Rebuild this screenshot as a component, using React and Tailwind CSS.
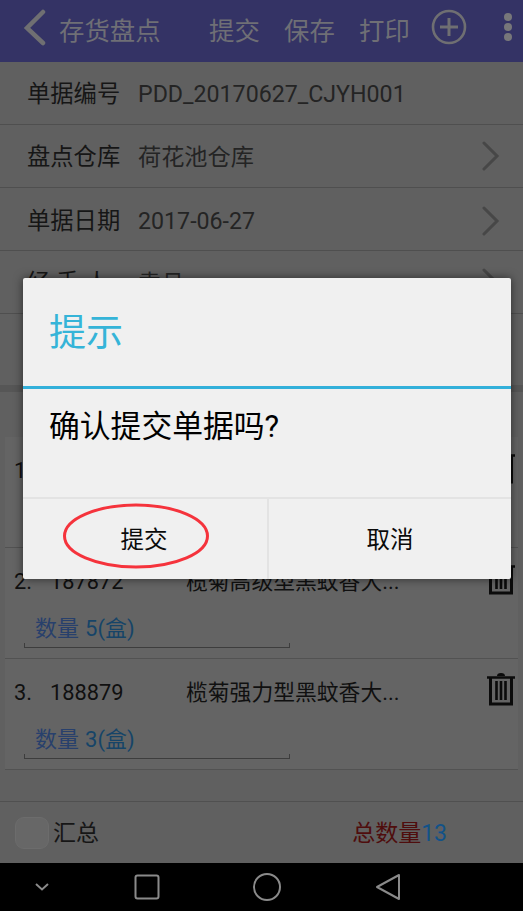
const cjk = { fontFamily: 'Roboto, "Noto Sans CJK SC", sans-serif' };

function Chevron() {
  return (
    <svg width="18" height="30" viewBox="0 0 18 30" className="shrink-0 -mt-[2px]">
      <path d="M2 2 L15 15 L2 28" fill="none" stroke="#474747" strokeWidth="3" strokeLinecap="round" />
    </svg>
  );
}

function FormRow({ label, value, arrow, pad = "pt-[3px]" }) {
  return (
    <div className={`flex items-center h-[63px] border-b border-[#4f4f4f] pl-[27px] pr-[23px] shrink-0 ${pad}`}>
      <span className="text-[23.3px] text-[#161616] w-[111px] shrink-0">{label}</span>
      <span className="text-[23.2px] text-[#242424] flex-1">{value}</span>
      {arrow && <Chevron />}
    </div>
  );
}

function Trash() {
  return (
    <svg width="30" height="36" viewBox="0 0 30 36" className="shrink-0 -mt-[8px]">
      <path d="M1 6.5 H29" stroke="#0b0b0b" strokeWidth="2.5" />
      <path d="M11 5 Q11 2 15 2 Q19 2 19 5" fill="#0b0b0b" />
      <path d="M4.5 7 V33 H25.5 V7" fill="none" stroke="#0b0b0b" strokeWidth="3" />
      <path d="M10.5 10 V29 M15 10 V29 M19.5 10 V29" stroke="#0b0b0b" strokeWidth="2.6" />
    </svg>
  );
}

function Item({ n, code, name, qty }) {
  return (
    <div className="h-[111px] ml-[5px] mr-[5px] bg-[#646464] border-b border-[#525252] flex flex-col pl-[9px] pr-[2px] shrink-0">
      <div className="flex items-center h-[66px] pt-[2px] text-[21.8px] text-[#101010]">
        <span className="w-[36px] shrink-0">{n}.</span>
        <span className="w-[136px] shrink-0">{code}</span>
        <span className="flex-1">{name}</span>
        <Trash />
      </div>
      <div className="ml-[10px] w-[266px] h-[34px] border-b border-[#3d3d3d] relative pl-[11px] flex items-center pb-[5px] text-[22px] text-[#164468]">
        <span className="text-[#28406c]">数量</span>
        <span className="ml-[6px]">{qty}(盒)</span>
        <span className="absolute left-0 bottom-0 h-[4px] w-px bg-[#3d3d3d]" />
        <span className="absolute right-0 bottom-0 h-[4px] w-px bg-[#3d3d3d]" />
      </div>
    </div>
  );
}

function Dialog() {
  return (
    <div className="absolute left-[23px] top-[278px] w-[488px] h-[301px] bg-[#f0f0f0] rounded-[2px] flex flex-col shadow-[0_0_10px_rgba(0,0,0,0.55)]">
      <div className="h-[108px] flex items-center pl-[26px] pt-[4px] text-[37px] text-[#35b4d8] shrink-0">提示</div>
      <div className="h-[3px] bg-[#33b0da] shrink-0" />
      <div className="h-[110px] flex items-center pl-[26px] pb-[31px] text-[30.8px] text-black border-b-2 border-[#e3e3e3] shrink-0">确认提交单据吗?</div>
      <div className="flex flex-1 text-[23.5px] text-[#0a0a0a]">
        <div className="flex-1 flex items-center justify-center pr-[2px] pt-[3px] border-r-2 border-[#e3e3e3] relative">
          提交
          <svg width="148" height="68" viewBox="0 0 148 68" className="absolute left-[39px] top-[3px]">
            <ellipse cx="74" cy="34" rx="71.5" ry="31" fill="none" stroke="#f5333c" strokeWidth="3" />
          </svg>
        </div>
        <div className="flex-1 flex items-center justify-center pt-[3px]">取消</div>
      </div>
    </div>
  );
}

export default function App() {
  return (
    <div className="relative w-[523px] h-[911px] overflow-hidden bg-[#606060] flex flex-col" style={cjk}>
      <div className="h-[62px] bg-[#343365] flex items-center text-[25.4px] text-[#6f6f75] shrink-0">
        <svg width="24" height="38" viewBox="0 0 24 38" className="ml-[23px] -mt-[6px] shrink-0">
          <path d="M20 3 L4 19 L20 34" fill="none" stroke="#6f6f72" strokeWidth="4.5" strokeLinecap="round" />
        </svg>
        <span className="ml-[12px] w-[150px] shrink-0 pt-[1px]">存货盘点</span>
        <span className="w-[75px] shrink-0 pt-[1px]">提交</span>
        <span className="w-[75px] shrink-0 pt-[1px]">保存</span>
        <span className="w-[72px] shrink-0 pt-[1px]">打印</span>
        <svg width="36" height="36" viewBox="0 0 36 36" className="shrink-0 -mt-[8px]">
          <circle cx="18" cy="18" r="16" fill="none" stroke="#6f6f72" strokeWidth="2.6" />
          <path d="M18 9 V27 M9 18 H27" stroke="#6f6f72" strokeWidth="3" />
        </svg>
        <div className="ml-[37px] flex flex-col gap-[2px] -mt-[8px] shrink-0">
          <span className="w-[8px] h-[8px] rounded-full bg-[#77777a]" />
          <span className="w-[8px] h-[8px] rounded-full bg-[#77777a]" />
          <span className="w-[8px] h-[8px] rounded-full bg-[#77777a]" />
        </div>
      </div>

      <FormRow label="单据编号" value="PDD_20170627_CJYH001" />
      <FormRow label="盘点仓库" value="荷花池仓库" arrow pad="pt-[2px]" />
      <FormRow label="单据日期" value="2017-06-27" arrow pad="pt-[5px]" />
      <FormRow label="经 手 人" value="袁旦" arrow />

      <div className="h-[78px] shrink-0 flex flex-col justify-end">
        <div className="h-[7px] bg-[#565656]" />
      </div>
      <div className="h-[45px] shrink-0" />

      <Item n="1" code="187871" name="榄菊高级型黑蚊香大..." qty="5" />
      <Item n="2" code="187872" name="榄菊高级型黑蚊香大..." qty="5" />
      <Item n="3" code="188879" name="榄菊强力型黑蚊香大..." qty="3" />

      <div className="flex-1" />

      <div className="h-[62px] border-t border-[#505050] flex items-center pl-[15px] pr-[76px] pt-[3px] shrink-0">
        <span className="w-[34px] h-[32px] rounded-[9px] bg-[#676767] border border-[#6c6c6c] mr-[4px] -mt-[3px]" />
        <span className="text-[23px] text-[#161616]">汇总</span>
        <span className="ml-auto text-[23px] text-[#4f0d0d]">总数量<span className="text-[#125288]">13</span></span>
      </div>

      <div className="h-[48px] bg-black flex items-center shrink-0 relative">
        <svg width="16" height="10" viewBox="0 0 16 10" className="ml-[34px] shrink-0">
          <path d="M2 2 L8 7.5 L14 2" fill="none" stroke="#8a8a8a" strokeWidth="2" />
        </svg>
        <svg width="26" height="26" viewBox="0 0 26 26" className="ml-[84px] shrink-0">
          <rect x="1.5" y="1.5" width="23" height="23" rx="2" fill="none" stroke="#8a8a8a" strokeWidth="2" />
        </svg>
        <svg width="30" height="30" viewBox="0 0 30 30" className="ml-[92px] shrink-0">
          <circle cx="15" cy="15" r="13" fill="none" stroke="#8a8a8a" strokeWidth="2" />
        </svg>
        <svg width="26" height="28" viewBox="0 0 26 28" className="ml-[93px] shrink-0">
          <path d="M2 14 L24 2 V26 Z" fill="none" stroke="#8a8a8a" strokeWidth="2" strokeLinejoin="round" />
        </svg>
      </div>

      <Dialog />
    </div>
  );
}
